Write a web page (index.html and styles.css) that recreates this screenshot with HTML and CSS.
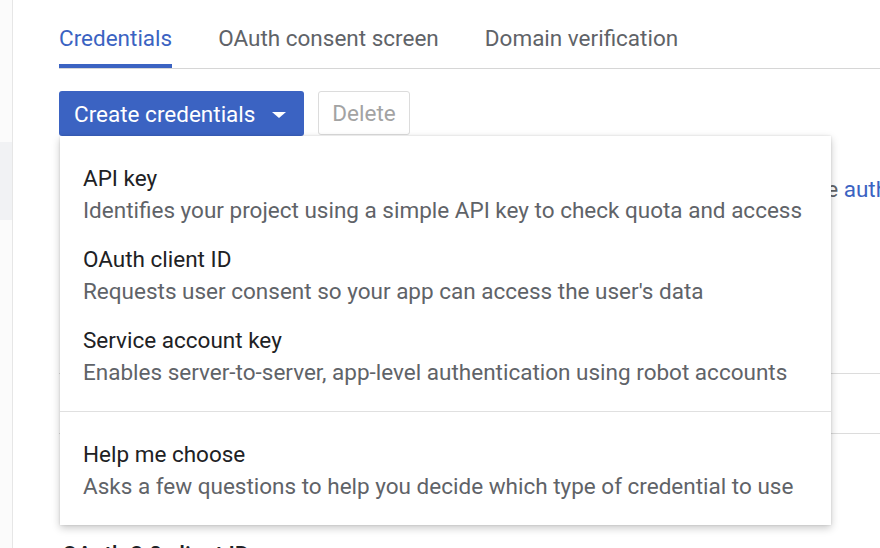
FILE: index.html
```html
<!DOCTYPE html>
<html>
<head>
<meta charset="utf-8">
<link rel="stylesheet" href="styles.css">
</head>
<body>
<div class="page">
  <aside class="sidebar">
    <div class="side-item"></div>
  </aside>
  <main class="main">
    <nav class="tabs">
      <div class="tab active">Credentials</div>
      <div class="tab">OAuth consent screen</div>
      <div class="tab">Domain verification</div>
    </nav>
    <div class="toolbar">
      <button class="btn-primary">Create credentials <span class="caret"></span></button>
      <button class="btn-disabled">Delete</button>
      <div class="menu">
        <div class="menu-section">
          <div class="menu-item">
            <div class="item-title">API key</div>
            <div class="item-desc">Identifies your project using a simple API key to check quota and access</div>
          </div>
          <div class="menu-item">
            <div class="item-title">OAuth client ID</div>
            <div class="item-desc">Requests user consent so your app can access the user's data</div>
          </div>
          <div class="menu-item">
            <div class="item-title">Service account key</div>
            <div class="item-desc">Enables server-to-server, app-level authentication using robot accounts</div>
          </div>
        </div>
        <div class="menu-section help">
          <div class="menu-item">
            <div class="item-title">Help me choose</div>
            <div class="item-desc">Asks a few questions to help you decide which type of credential to use</div>
          </div>
        </div>
      </div>
    </div>
    <div class="content">
      <p class="intro">Create credentials to access your enabled APIs. Make sure you use the <a class="link">authorized domains</a></p>
      <div class="table">
        <div class="row"></div>
        <div class="row"></div>
      </div>
      <h3 class="section-title">OAuth 2.0 client IDs</h3>
    </div>
  </main>
</div>
</body>
</html>
```

FILE: styles.css
```css
* { box-sizing: border-box; }
html, body { margin: 0; padding: 0; background: #fff; }
body {
  font-family: Roboto, "Noto Sans", sans-serif;
  width: 880px;
  height: 548px;
  overflow: hidden;
}
.page { display: flex; height: 548px; }
.sidebar {
  width: 13px;
  flex: none;
  background: #fbfbfb;
  border-right: 1px solid #e6e6e6;
  padding-top: 142px;
}
.side-item { height: 78px; background: #f1f2f4; }
.main {
  flex: 1;
  padding-left: 46px;
  min-width: 0;
  overflow: hidden;
}
.tabs {
  display: flex;
  gap: 46px;
  border-bottom: 1px solid #d6d6d6;
  height: 69px;
}
.tab {
  font-size: 22.5px;
  line-height: 26px;
  padding-top: 25px;
  color: #5f6368;
  border-bottom: 4px solid transparent;
  height: 68px;
  white-space: nowrap;
}
.tab.active { color: #3b63c2; border-bottom-color: #3b63c2; }
.toolbar {
  position: relative;
  display: flex;
  gap: 14px;
  margin-top: 22px;
  height: 45px;
}
.btn-primary {
  font-family: inherit;
  background: #3b63c2;
  color: #fff;
  border: none;
  border-radius: 3px;
  font-size: 22.5px;
  height: 45px;
  padding: 0 0 0 15px;
  display: flex;
  align-items: center;
  gap: 17px;
  width: 245px;
  flex: none;
}
.caret {
  width: 0; height: 0;
  border-left: 7px solid transparent;
  border-right: 7px solid transparent;
  border-top: 6px solid #fff;
  margin-top: 2px;
}
.btn-disabled {
  font-family: inherit;
  background: #fff;
  color: #a3a3a3;
  border: 1px solid #dcdcdc;
  border-radius: 3px;
  font-size: 22.5px;
  height: 44px;
  width: 92px;
  padding: 0;
  flex: none;
}
.menu {
  position: absolute;
  top: 45px;
  left: 1px;
  width: 771px;
  height: 389px;
  background: #fff;
  box-shadow: 0 3px 8px rgba(0,0,0,0.22), 0 0 2px rgba(0,0,0,0.12);
  z-index: 5;
}
.menu-section { padding: 17px 0 15px; border-bottom: 1px solid #e0e0e0; }
.menu-section.help { border-bottom: none; padding: 17px 0 0; }
.menu-item { padding: 9px 23px 8px; }
.item-title { font-size: 22.5px; line-height: 32px; color: #202124; white-space: nowrap; }
.item-desc { font-size: 22.5px; line-height: 32px; color: #5f6368; white-space: nowrap; }
.content { padding-top: 37px; }
.intro {
  margin: 0;
  font-size: 22.5px;
  line-height: 32px;
  color: #5f6368;
  white-space: nowrap;
  padding-left: 74px;
}
.link { color: #3b63c2; }
.table { margin-top: 168px; }
.row { height: 60px; border-top: 1px solid #dcdcdc; }
.section-title {
  margin: 48px 0 0;
  padding-left: 3px;
  font-size: 22.5px;
  font-weight: 500;
  color: #202124;
}
```
